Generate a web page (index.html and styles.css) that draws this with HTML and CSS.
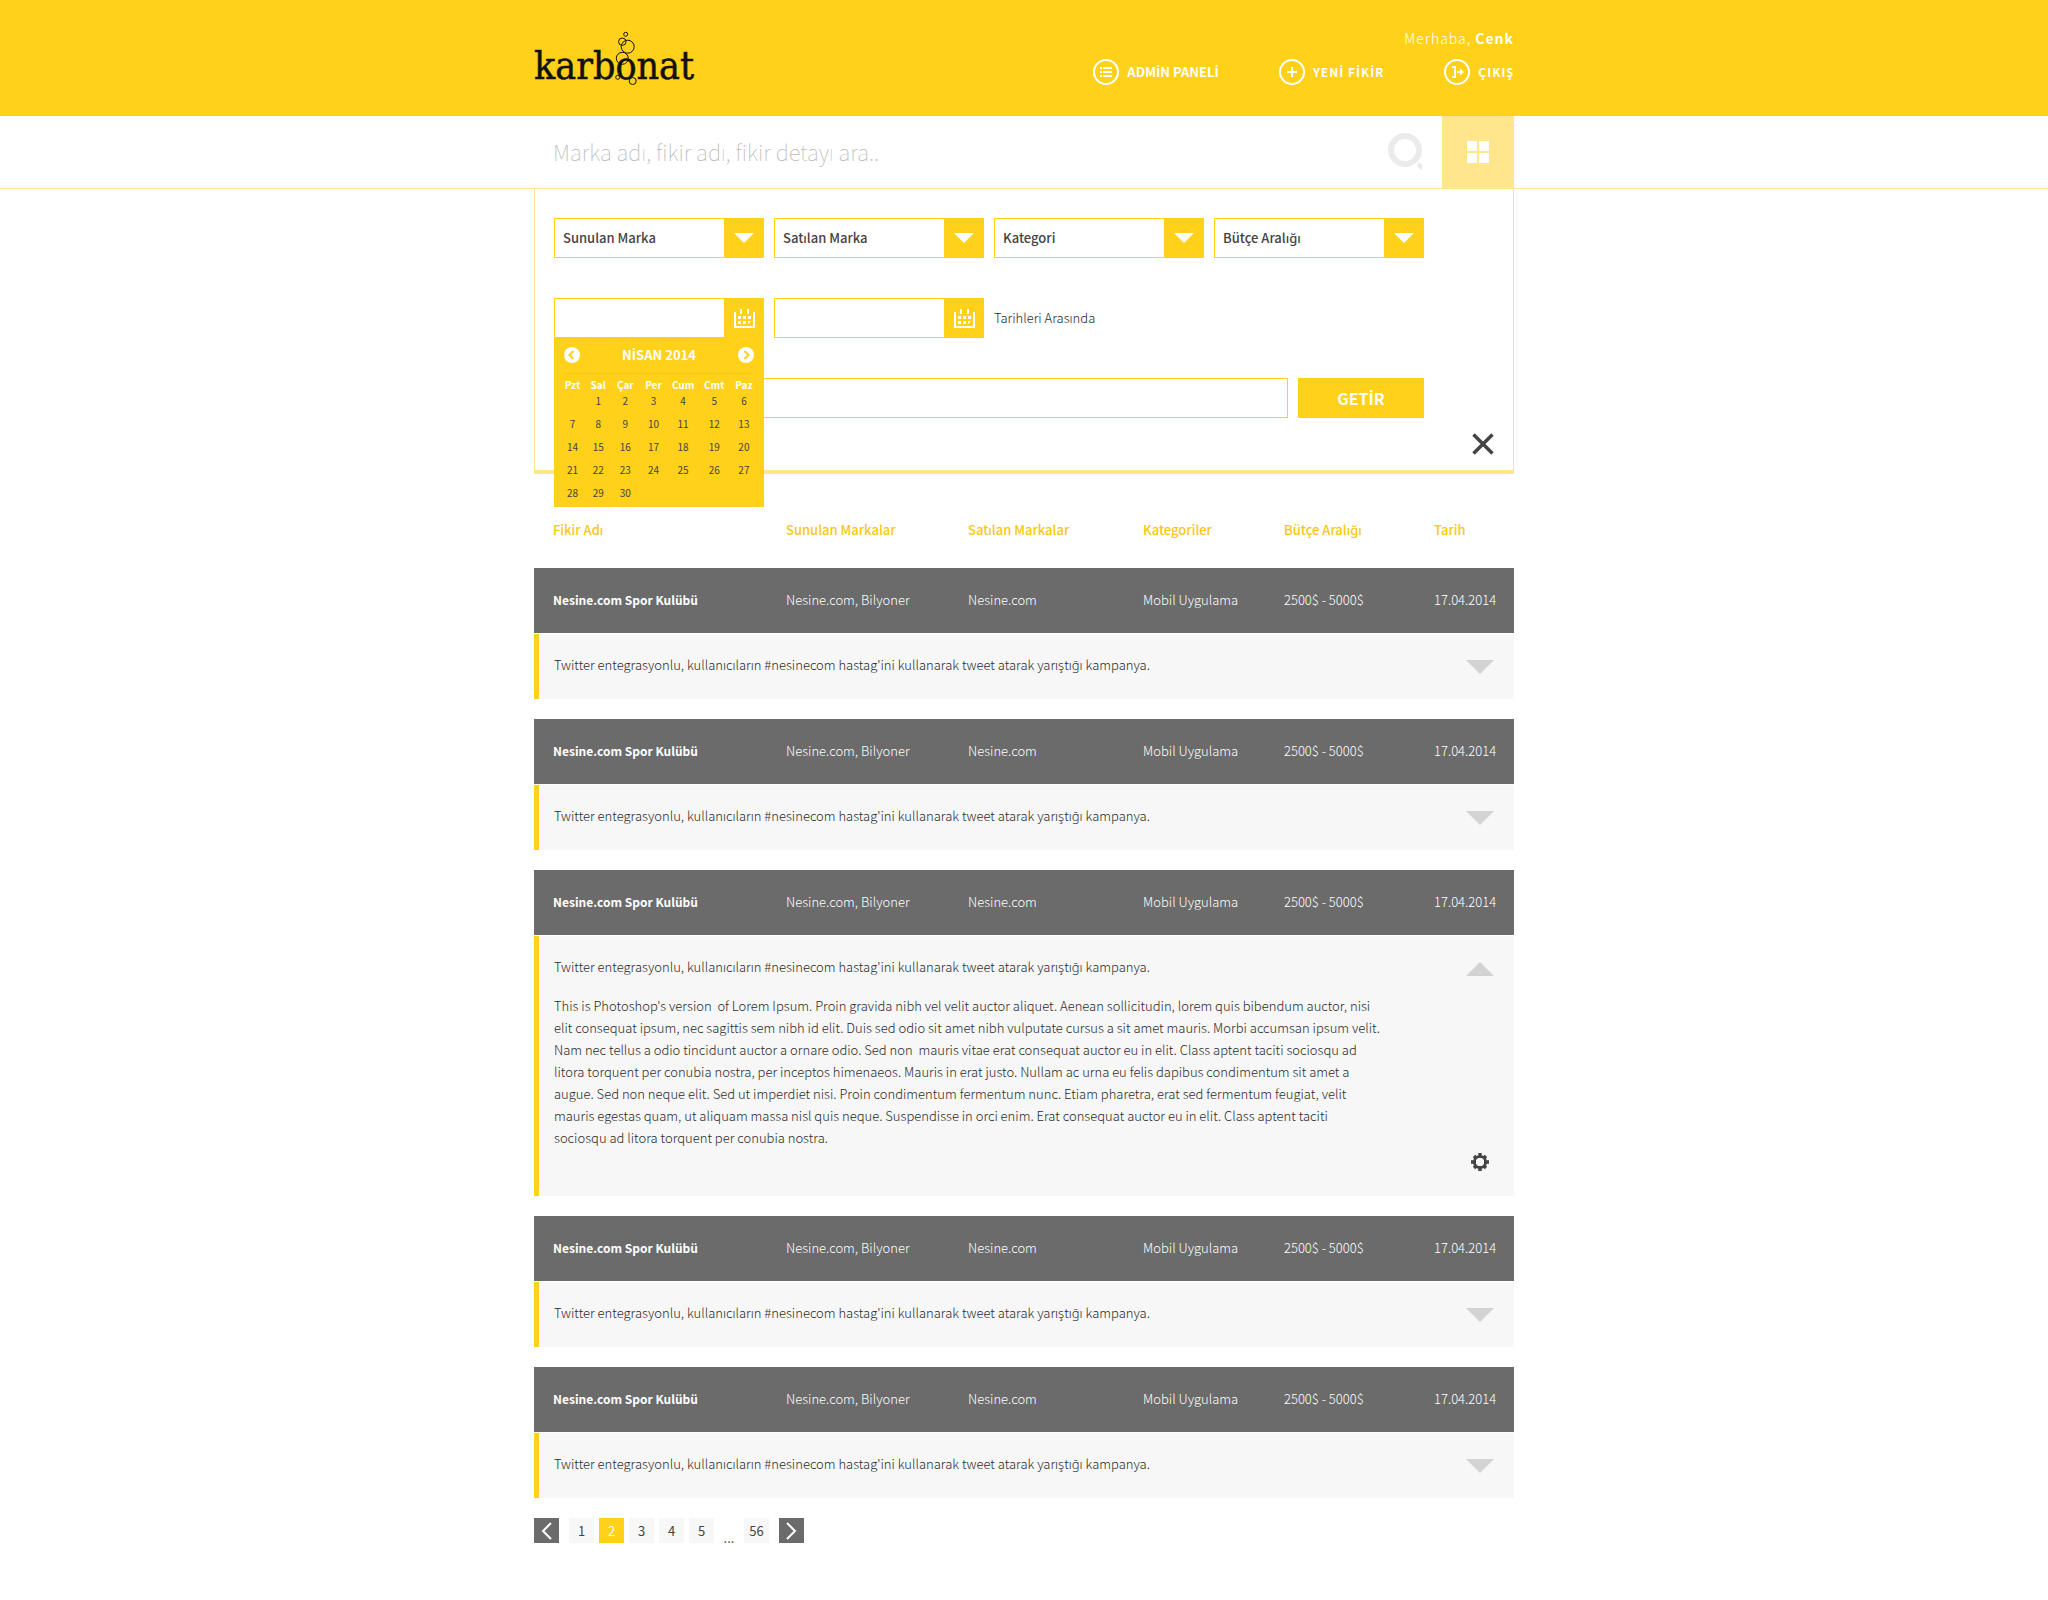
FILE: index.html
```html
<!DOCTYPE html>
<html lang="tr">
<head>
<meta charset="utf-8">
<meta name="viewport" content="width=device-width, initial-scale=1">
<title>Karbonat</title>
<link rel="stylesheet" href="styles.css">
</head>
<body>
<svg class="sprite" aria-hidden="true">
  <symbol id="calendar" viewBox="0 0 21 19"><path d="M0 3h2v14h17V3h2v16H0zM6 0h2v5H6zM13 0h2v5h-2zM4 7h3v3H4zM9 7h3v3H9zM14 7h3v3h-3zM4 12h3v3H4zM9 12h3v3H9zM14 12h3l-3 3z"/></symbol>
  <symbol id="triangle" viewBox="0 0 28 14"><path d="M0 0h28L14 14z"/></symbol>
</svg>

<header class="top">
  <div class="container top-inner">
    <a class="logo" href="#" aria-label="karbonat">
      <svg width="164" height="60" viewBox="0 0 164 60">
        <text class="logo-text" x="0" y="49">karbonat</text>
        <g fill="none" stroke="#111">
          <circle cx="91.7" cy="4.3" r="2"/>
          <circle cx="88.3" cy="11.7" r="3.7"/>
          <circle cx="93.7" cy="16.7" r="6.5"/>
          <circle cx="88.3" cy="28.3" r="6"/>
          <circle cx="83.7" cy="47.3" r="2"/>
          <circle cx="98.7" cy="51" r="3.5"/>
        </g>
      </svg>
    </a>
    <div class="account">
      <p class="greeting">Merhaba, <strong>Cenk</strong></p>
      <nav class="nav">
        <a class="nav-link" href="#">
          <svg width="26" height="26" viewBox="0 0 26 26"><circle cx="13" cy="13" r="12" fill="none" stroke="#fff" stroke-width="2"/><path fill="#fff" d="M7 8h2v2H7zM10 8h9v2h-9zM7 12h2v2H7zM10 12h9v2h-9zM7 16h2v2H7zM10 16h9v2h-9z"/></svg>
          <span>ADM<span class="dotted">İ</span>N PANEL<span class="dotted">İ</span></span>
        </a>
        <a class="nav-link spaced" href="#">
          <svg width="26" height="26" viewBox="0 0 26 26"><circle cx="13" cy="13" r="12" fill="none" stroke="#fff" stroke-width="2"/><path fill="#fff" d="M12 8h2v4h4v2h-4v4h-2v-4H8v-2h4z"/></svg>
          <span>YEN<span class="dotted">İ</span> F<span class="dotted">İ</span>K<span class="dotted">İ</span>R</span>
        </a>
        <a class="nav-link spaced" href="#">
          <svg width="26" height="26" viewBox="0 0 26 26"><circle cx="13" cy="13" r="12" fill="none" stroke="#fff" stroke-width="2"/><path fill="#fff" d="M8 7h4v12H8v-2h2V9H8zM13 12h3V9.500l4 3.500-4 3.500V14h-3z"/></svg>
          <span>ÇIKIŞ</span>
        </a>
      </nav>
    </div>
  </div>
</header>

<div class="search">
  <form class="container search-inner">
    <input class="search-input" type="search" placeholder="Marka adı, fikir adı, fikir detayı ara.." aria-label="Ara">
    <button class="search-button" type="submit" aria-label="Ara">
      <svg width="34" height="38" viewBox="0 0 34 38"><circle cx="17" cy="17" r="14" fill="none" stroke="#ebebeb" stroke-width="6"/><path fill="#ebebeb" d="M31.500 29.500L34 31.500V38l-5.500-5.500z"/></svg>
    </button>
    <button class="grid-button" type="button" aria-label="Detaylı arama">
      <svg width="22" height="22" viewBox="0 0 22 22"><path fill="#fff" d="M0 0h10v10H0zM12 0h10v10H12zM0 12h10v10H0zM12 12h10v10H12z"/></svg>
    </button>
  </form>
</div>

<main class="container">
  <form class="panel">
    <div class="filters">
      <div class="select"><select aria-label="Sunulan Marka"><option>Sunulan Marka</option></select></div>
      <div class="select"><select aria-label="Satılan Marka"><option>Satılan Marka</option></select></div>
      <div class="select"><select aria-label="Kategori"><option>Kategori</option></select></div>
      <div class="select"><select aria-label="Bütçe Aralığı"><option>Bütçe Aralığı</option></select></div>

      <div class="date">
        <input type="text" aria-label="Başlangıç tarihi">
        <button type="button" aria-label="Takvimi aç"><svg width="21" height="19"><use href="#calendar"/></svg></button>
        <div class="picker">
          <div class="picker-head">
            <button type="button" aria-label="Önceki ay"><svg width="16" height="16" viewBox="0 0 16 16"><circle cx="8" cy="8" r="8" fill="#fff"/><path d="M9.500 4L5.500 8l4 4" fill="none" stroke="#ffd11a" stroke-width="2"/></svg></button>
            <strong>N<span class="dotted">İ</span>SAN 2014</strong>
            <button type="button" aria-label="Sonraki ay"><svg width="16" height="16" viewBox="0 0 16 16"><circle cx="8" cy="8" r="8" fill="#fff"/><path d="M6.500 4l4 4-4 4" fill="none" stroke="#ffd11a" stroke-width="2"/></svg></button>
          </div>
          <table class="days">
            <colgroup><col class="d1"><col class="d2"><col class="d3"><col class="d3"><col class="d4"><col class="d4"><col class="d3"></colgroup>
            <thead><tr><th>Pzt</th><th>Sal</th><th>Çar</th><th>Per</th><th>Cum</th><th>Cmt</th><th>Paz</th></tr></thead>
            <tbody>
              <tr><td></td><td>1</td><td>2</td><td>3</td><td>4</td><td>5</td><td>6</td></tr>
              <tr><td>7</td><td>8</td><td>9</td><td>10</td><td>11</td><td>12</td><td>13</td></tr>
              <tr><td>14</td><td>15</td><td>16</td><td>17</td><td>18</td><td>19</td><td>20</td></tr>
              <tr><td>21</td><td>22</td><td>23</td><td>24</td><td>25</td><td>26</td><td>27</td></tr>
              <tr><td>28</td><td>29</td><td>30</td><td></td><td></td><td></td><td></td></tr>
            </tbody>
          </table>
        </div>
      </div>
      <div class="date">
        <input type="text" aria-label="Bitiş tarihi">
        <button type="button" aria-label="Takvimi aç"><svg width="21" height="19"><use href="#calendar"/></svg></button>
      </div>
      <span class="between">Tarihleri Arasında</span>

      <div class="keyword">
        <input type="text" aria-label="Anahtar kelime">
        <button type="submit">GET<span class="dotted">İ</span>R</button>
      </div>
    </div>
    <button class="close" type="button" aria-label="Kapat">
      <svg width="22" height="22" viewBox="0 0 22 22"><path d="M1.500 1.500l19 19M20.500 1.500l-19 19" stroke="#444" stroke-width="3.500"/></svg>
    </button>
  </form>

  <table class="ideas">
    <colgroup><col class="c-name"><col class="c-offered"><col class="c-sold"><col class="c-category"><col class="c-budget"><col class="c-date"></colgroup>
    <thead>
      <tr><th>Fikir Adı</th><th>Sunulan Markalar</th><th>Satılan Markalar</th><th>Kategoriler</th><th>Bütçe Aralığı</th><th>Tarih</th></tr>
    </thead>
    <tbody>
      <tr class="idea"><th>Nesine.com Spor Kulübü</th><td>Nesine.com, Bilyoner</td><td>Nesine.com</td><td>Mobil Uygulama</td><td>2500$ - 5000$</td><td>17.04.2014</td></tr>
      <tr><td class="detail-cell" colspan="6"><div class="detail"><div class="summary"><p>Twitter entegrasyonlu, kullanıcıların #nesinecom hastag'ini kullanarak tweet atarak yarıştığı kampanya.</p><button type="button" aria-label="Aç"><svg width="28" height="14"><use href="#triangle"/></svg></button></div></div></td></tr>
    </tbody>
    <tbody>
      <tr class="idea"><th>Nesine.com Spor Kulübü</th><td>Nesine.com, Bilyoner</td><td>Nesine.com</td><td>Mobil Uygulama</td><td>2500$ - 5000$</td><td>17.04.2014</td></tr>
      <tr><td class="detail-cell" colspan="6"><div class="detail"><div class="summary"><p>Twitter entegrasyonlu, kullanıcıların #nesinecom hastag'ini kullanarak tweet atarak yarıştığı kampanya.</p><button type="button" aria-label="Aç"><svg width="28" height="14"><use href="#triangle"/></svg></button></div></div></td></tr>
    </tbody>
    <tbody>
      <tr class="idea"><th>Nesine.com Spor Kulübü</th><td>Nesine.com, Bilyoner</td><td>Nesine.com</td><td>Mobil Uygulama</td><td>2500$ - 5000$</td><td>17.04.2014</td></tr>
      <tr><td class="detail-cell" colspan="6"><div class="detail open">
        <div class="summary"><p>Twitter entegrasyonlu, kullanıcıların #nesinecom hastag'ini kullanarak tweet atarak yarıştığı kampanya.</p><button type="button" aria-label="Kapat"><svg width="28" height="14" viewBox="0 0 28 14"><path d="M14 0l14 14H0z"/></svg></button></div>
        <p class="text">This is Photoshop's version&nbsp; of Lorem Ipsum. Proin gravida nibh vel velit auctor aliquet. Aenean sollicitudin, lorem quis bibendum auctor, nisi<br>
        elit consequat ipsum, nec sagittis sem nibh id elit. Duis sed odio sit amet nibh vulputate cursus a sit amet mauris. Morbi accumsan ipsum velit.<br>
        Nam nec tellus a odio tincidunt auctor a ornare odio. Sed non&nbsp; mauris vitae erat consequat auctor eu in elit. Class aptent taciti sociosqu ad<br>
        litora torquent per conubia nostra, per inceptos himenaeos. Mauris in erat justo. Nullam ac urna eu felis dapibus condimentum sit amet a<br>
        augue. Sed non neque elit. Sed ut imperdiet nisi. Proin condimentum fermentum nunc. Etiam pharetra, erat sed fermentum feugiat, velit<br>
        mauris egestas quam, ut aliquam massa nisl quis neque. Suspendisse in orci enim. Erat consequat auctor eu in elit. Class aptent taciti<br>
        sociosqu ad litora torquent per conubia nostra.</p>
        <div class="tools"><button type="button" aria-label="Ayarlar"><svg width="18" height="18" viewBox="-9 -9 18 18"><circle r="5.500" fill="none" stroke="#444" stroke-width="3"/><path d="M0-9v4M0 9V5M-9 0h4M9 0H5M-6-6l2.500 2.500M6 6L3.500 3.500M-6 6l2.500-2.500M6-6L3.500-3.500" stroke="#444" stroke-width="3.400"/><circle r="4" fill="#f7f7f7"/></svg></button></div>
      </div></td></tr>
    </tbody>
    <tbody>
      <tr class="idea"><th>Nesine.com Spor Kulübü</th><td>Nesine.com, Bilyoner</td><td>Nesine.com</td><td>Mobil Uygulama</td><td>2500$ - 5000$</td><td>17.04.2014</td></tr>
      <tr><td class="detail-cell" colspan="6"><div class="detail"><div class="summary"><p>Twitter entegrasyonlu, kullanıcıların #nesinecom hastag'ini kullanarak tweet atarak yarıştığı kampanya.</p><button type="button" aria-label="Aç"><svg width="28" height="14"><use href="#triangle"/></svg></button></div></div></td></tr>
    </tbody>
    <tbody>
      <tr class="idea"><th>Nesine.com Spor Kulübü</th><td>Nesine.com, Bilyoner</td><td>Nesine.com</td><td>Mobil Uygulama</td><td>2500$ - 5000$</td><td>17.04.2014</td></tr>
      <tr><td class="detail-cell" colspan="6"><div class="detail"><div class="summary"><p>Twitter entegrasyonlu, kullanıcıların #nesinecom hastag'ini kullanarak tweet atarak yarıştığı kampanya.</p><button type="button" aria-label="Aç"><svg width="28" height="14"><use href="#triangle"/></svg></button></div></div></td></tr>
    </tbody>
  </table>

  <nav class="pages" aria-label="Sayfalar">
    <a class="page step prev" href="#" aria-label="Önceki"><svg width="11" height="18" viewBox="0 0 11 18"><path d="M10 1L2 9l8 8" fill="none" stroke="#fff" stroke-width="2"/></svg></a>
    <a class="page" href="#">1</a>
    <a class="page current" href="#" aria-current="page">2</a>
    <a class="page" href="#">3</a>
    <a class="page" href="#">4</a>
    <a class="page" href="#">5</a>
    <span class="dots">...</span>
    <a class="page" href="#">56</a>
    <a class="page step next" href="#" aria-label="Sonraki"><svg width="11" height="18" viewBox="0 0 11 18"><path d="M1 1l8 8-8 8" fill="none" stroke="#fff" stroke-width="2"/></svg></a>
  </nav>
</main>
</body>
</html>
```
FILE: styles.css
```css
:root {
  --yellow: #ffd11a;
  --pale: #ffe68c;
  --ink: #444;
  --ink-light: #2a2a2a;
  --gray: #6b6b6b;
}

* { box-sizing: border-box; }

body {
  margin: 0;
  background: #fff;
  color: var(--ink);
  font-family: "Noto Sans CJK JP", "Noto Sans", sans-serif;
  font-size: 13px;
  font-weight: 300;
  line-height: 22px;
}

p { margin: 0; }
a { color: inherit; text-decoration: none; }
svg { display: block; }
strong { font-weight: 700; }

button, input, select {
  font: inherit;
  color: inherit;
  margin: 0;
  padding: 0;
  border: 0;
  border-radius: 0;
  background: none;
}

.sprite { position: absolute; width: 0; height: 0; }

/* The CJK family has no dotted capital I */
.dotted { font-family: "Open Sans", sans-serif; line-height: 1; }

.container {
  width: 100%;
  max-width: 980px;
  margin: 0 auto;
}

/* Header */
.top { background: var(--yellow); color: #fff; }

.top-inner {
  display: flex;
  justify-content: space-between;
  padding: 27px 0 31px;
}

.logo { padding-top: 3px; margin-bottom: -5px; }

.logo-text {
  font: 39px "DejaVu Serif Condensed", "DejaVu Serif", serif;
  fill: #111;
  stroke: #111;
  stroke-width: 0.5;
}

.greeting {
  text-align: right;
  font-size: 14px;
  letter-spacing: 1px;
  margin-bottom: 10px;
}

.nav { display: flex; gap: 60px; }

.nav-link {
  display: flex;
  align-items: center;
  gap: 8px;
  font-weight: 700;
}

.spaced { font-size: 12px; letter-spacing: 1px; }

/* Search */
.search { border-bottom: 1px solid var(--pale); }
.search-inner { display: flex; align-items: stretch; height: 72px; }

.search-input {
  flex: 1;
  min-width: 0;
  padding: 0 0 2px 19px;
  font-size: 22px;
  font-weight: 100;
  appearance: none;
  outline: 0;
}

.search-input::placeholder { color: #bbb; opacity: 1; }
.search-button { padding: 0 20px; }

.grid-button {
  width: 72px;
  display: grid;
  place-items: center;
  background: var(--pale);
}

/* Filter panel */
.panel {
  display: flex;
  justify-content: space-between;
  align-items: flex-end;
  padding: 29px 19px 12px;
  border: 1px solid var(--pale);
  border-top: 0;
  border-bottom-width: 4px;
}

.filters {
  display: grid;
  grid-template-columns: repeat(4, 210px);
  grid-auto-rows: 40px;
  gap: 40px 10px;
  margin-bottom: 40px;
}

.select { position: relative; }

.select select {
  width: 100%;
  height: 100%;
  padding-left: 8px;
  border: 1px solid var(--yellow);
  appearance: none;
  font-weight: 500;
  background: linear-gradient(var(--yellow), var(--yellow)) right / 39px 100% no-repeat;
}

.select::after {
  content: "";
  position: absolute;
  top: 15px;
  right: 10px;
  width: 20px;
  height: 10px;
  background: #fff;
  clip-path: polygon(0 0, 100% 0, 50% 100%);
  pointer-events: none;
}

.date {
  position: relative;
  display: flex;
  border: 1px solid var(--yellow);
}

.date > input { flex: 1; min-width: 0; padding: 0 8px; }

.date > button {
  width: 39px;
  padding-left: 2px;
  display: grid;
  place-items: center;
  background: var(--yellow);
  fill: #fff;
}

.between { align-self: center; color: var(--ink-light); }

.keyword { grid-column: 1 / -1; display: flex; gap: 10px; }

.keyword input {
  flex: 1;
  min-width: 0;
  padding: 0 8px;
  border: 1px solid var(--yellow);
}

.keyword button {
  width: 126px;
  background: var(--yellow);
  color: #fff;
  font-size: 16px;
  font-weight: 700;
}

.close { margin-bottom: 3px; }

/* Date picker */
.picker {
  position: absolute;
  z-index: 1;
  top: 39px;
  left: -1px;
  width: 210px;
  padding: 0 6px 2px;
  background: var(--yellow);
}

.picker-head {
  display: flex;
  justify-content: space-between;
  align-items: center;
  height: 36px;
  margin: 0 4px;
  padding-bottom: 2px;
  border-bottom: 1px solid #ffc60f;
  color: #fff;
}

.days {
  table-layout: fixed;
  width: 198px;
  border-collapse: collapse;
  font-size: 10px;
  font-weight: 400;
  text-align: center;
}

.d1 { width: 25px; }
.d2 { width: 26px; }
.d3 { width: 28px; }
.d4 { width: 31px; }
.days th { padding: 6px 0 0; color: #fff; line-height: 10px; }
.days td { height: 23px; padding: 0; line-height: 21px; vertical-align: top; }

/* Ideas */
.ideas {
  width: 100%;
  table-layout: fixed;
  border-collapse: collapse;
  text-align: left;
}

.c-name { width: 252px; }
.c-offered { width: 182px; }
.c-sold { width: 175px; }
.c-category { width: 141px; }
.c-budget { width: 150px; }
.c-date { width: 80px; }

.ideas th, .ideas td { padding: 0; }
.ideas th:first-child { padding-left: 19px; }
.ideas thead th { padding-top: 45px; padding-bottom: 27px; color: #f9c80e; font-weight: 500; }
.idea { height: 65px; background: var(--gray); color: #fff; }
.ideas .idea > * { padding-bottom: 2px; }
.idea th { font-size: 12px; font-weight: 700; }
.ideas .detail-cell { padding: 1px 0 20px; }

.detail {
  padding: 20px 20px 23px 15px;
  border-left: 5px solid var(--yellow);
  background: #f7f7f7;
  color: var(--ink-light);
}

.open { padding-bottom: 25px; }

.summary { display: flex; justify-content: space-between; align-items: center; }
.summary button { padding-top: 4px; fill: #d3d3d3; }
.text { margin-top: 17px; }
.tools { display: flex; justify-content: flex-end; margin-top: 4px; padding-right: 5px; }

/* Pagination */
.pages { display: flex; gap: 5px; padding-bottom: 50px; font-weight: 400; }

.page {
  display: grid;
  place-items: center;
  width: 25px;
  height: 25px;
  background: #f7f7f7;
}

.current { background: var(--yellow); color: #fff; }
.step { background: var(--gray); }
.prev { margin-right: 5px; }
.next { margin-left: 5px; }
.dots { width: 20px; padding-top: 9px; text-align: center; }
```
